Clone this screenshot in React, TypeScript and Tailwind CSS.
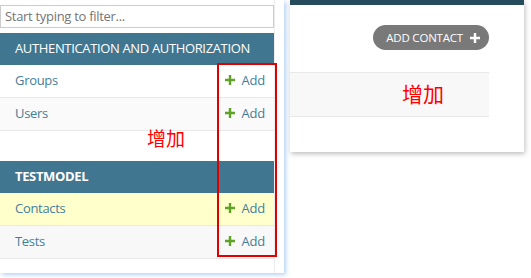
import React from 'react'

// ─── Small icons ──────────────────────────────────────────────────────────────
function PlusIcon({ className }: { className?: string }) {
  return (
    <svg viewBox="0 0 10 10" className={className} aria-hidden>
      <path d="M3.8 0h2.4v3.8H10v2.4H6.2V10H3.8V6.2H0V3.8h3.8z" fill="currentColor" />
    </svg>
  )
}

type Row = { name: string; bg: string }

function ModelRow({ row }: { row: Row }) {
  return (
    <div className={`flex h-[33px] items-center justify-between border-b border-[#e8e8e8] pl-[15px] pr-[9px] ${row.bg}`}>
      <span className="text-[13px] tracking-[-0.3px] text-[#447e9b]">{row.name}</span>
      <span className="flex items-center gap-[6px] text-[13px] tracking-[-0.2px] text-[#447e9b]">
        <PlusIcon className="mb-[2px] h-[10px] w-[10px] text-[#5fa225]" />
        Add
      </span>
    </div>
  )
}

function Caption({ title, bold }: { title: string; bold?: boolean }) {
  return (
    <div className={`flex h-[32px] items-center bg-[#417690] pl-[15px] text-[13px] uppercase tracking-[-0.35px] text-white ${bold ? 'font-bold' : ''}`}>
      {title}
    </div>
  )
}

// ─── Page ─────────────────────────────────────────────────────────────────────
export default function App() {
  return (
    <div
      className="relative flex h-[278px] w-[531px] items-start overflow-hidden bg-white"
      style={{ fontFamily: '"Open Sans", "Noto Sans CJK SC", sans-serif' }}
    >
      {/* Left window: app list */}
      <div className="h-[273px] w-[284px] shrink-0 bg-white shadow-[2px_2px_4px_#b8d4f5]">
        <div className="h-full w-[275px] border-r border-[#ececec] pt-[5px]">
          <div className="flex h-[23px] items-center border border-[#cccccc] pl-[4px] text-[13px] tracking-[-0.3px] text-[#757575]">
            Start typing to filter...
          </div>
          <div className="mt-[5px]">
            <Caption title="Authentication and Authorization" />
            <ModelRow row={{ name: 'Groups', bg: 'bg-white' }} />
            <ModelRow row={{ name: 'Users', bg: 'bg-[#fafafa]' }} />
            <div className="h-[30px]" />
            <Caption title="Testmodel" bold />
            <ModelRow row={{ name: 'Contacts', bg: 'bg-[#ffffcc]' }} />
            <ModelRow row={{ name: 'Tests', bg: 'bg-[#f8f8f8]' }} />
          </div>
        </div>
      </div>

      {/* Right window: change list */}
      <div className="ml-[6px] h-[152px] w-[234px] shrink-0 bg-white shadow-[1px_2px_5px_rgba(0,0,0,0.25)]">
        <div className="h-[5px] bg-[#264b5d]" />
        <div className="flex justify-end pr-[35px] pt-[20px]">
          <div className="flex h-[25px] items-center gap-[7px] rounded-full bg-[#797979] pl-[13px] pr-[9px] text-[11.5px] tracking-[-0.2px] text-white">
            ADD CONTACT
            <PlusIcon className="h-[10px] w-[10px] text-white" />
          </div>
        </div>
        <div className="mt-[22px] flex h-[45px] w-[199px] items-center border-y border-[#e8e8e8] bg-[#f8f8f8] pl-[112px] text-[21px] text-[#ff0000]">
          增加
        </div>
      </div>

      {/* Annotations */}
      <div className="absolute left-[217px] top-[63px] h-[194px] w-[60px] border-2 border-[#e00000]" />
      <div className="absolute left-[147px] top-[126px] text-[19px] leading-[26px] text-[#ff0000]">增加</div>
    </div>
  )
}
